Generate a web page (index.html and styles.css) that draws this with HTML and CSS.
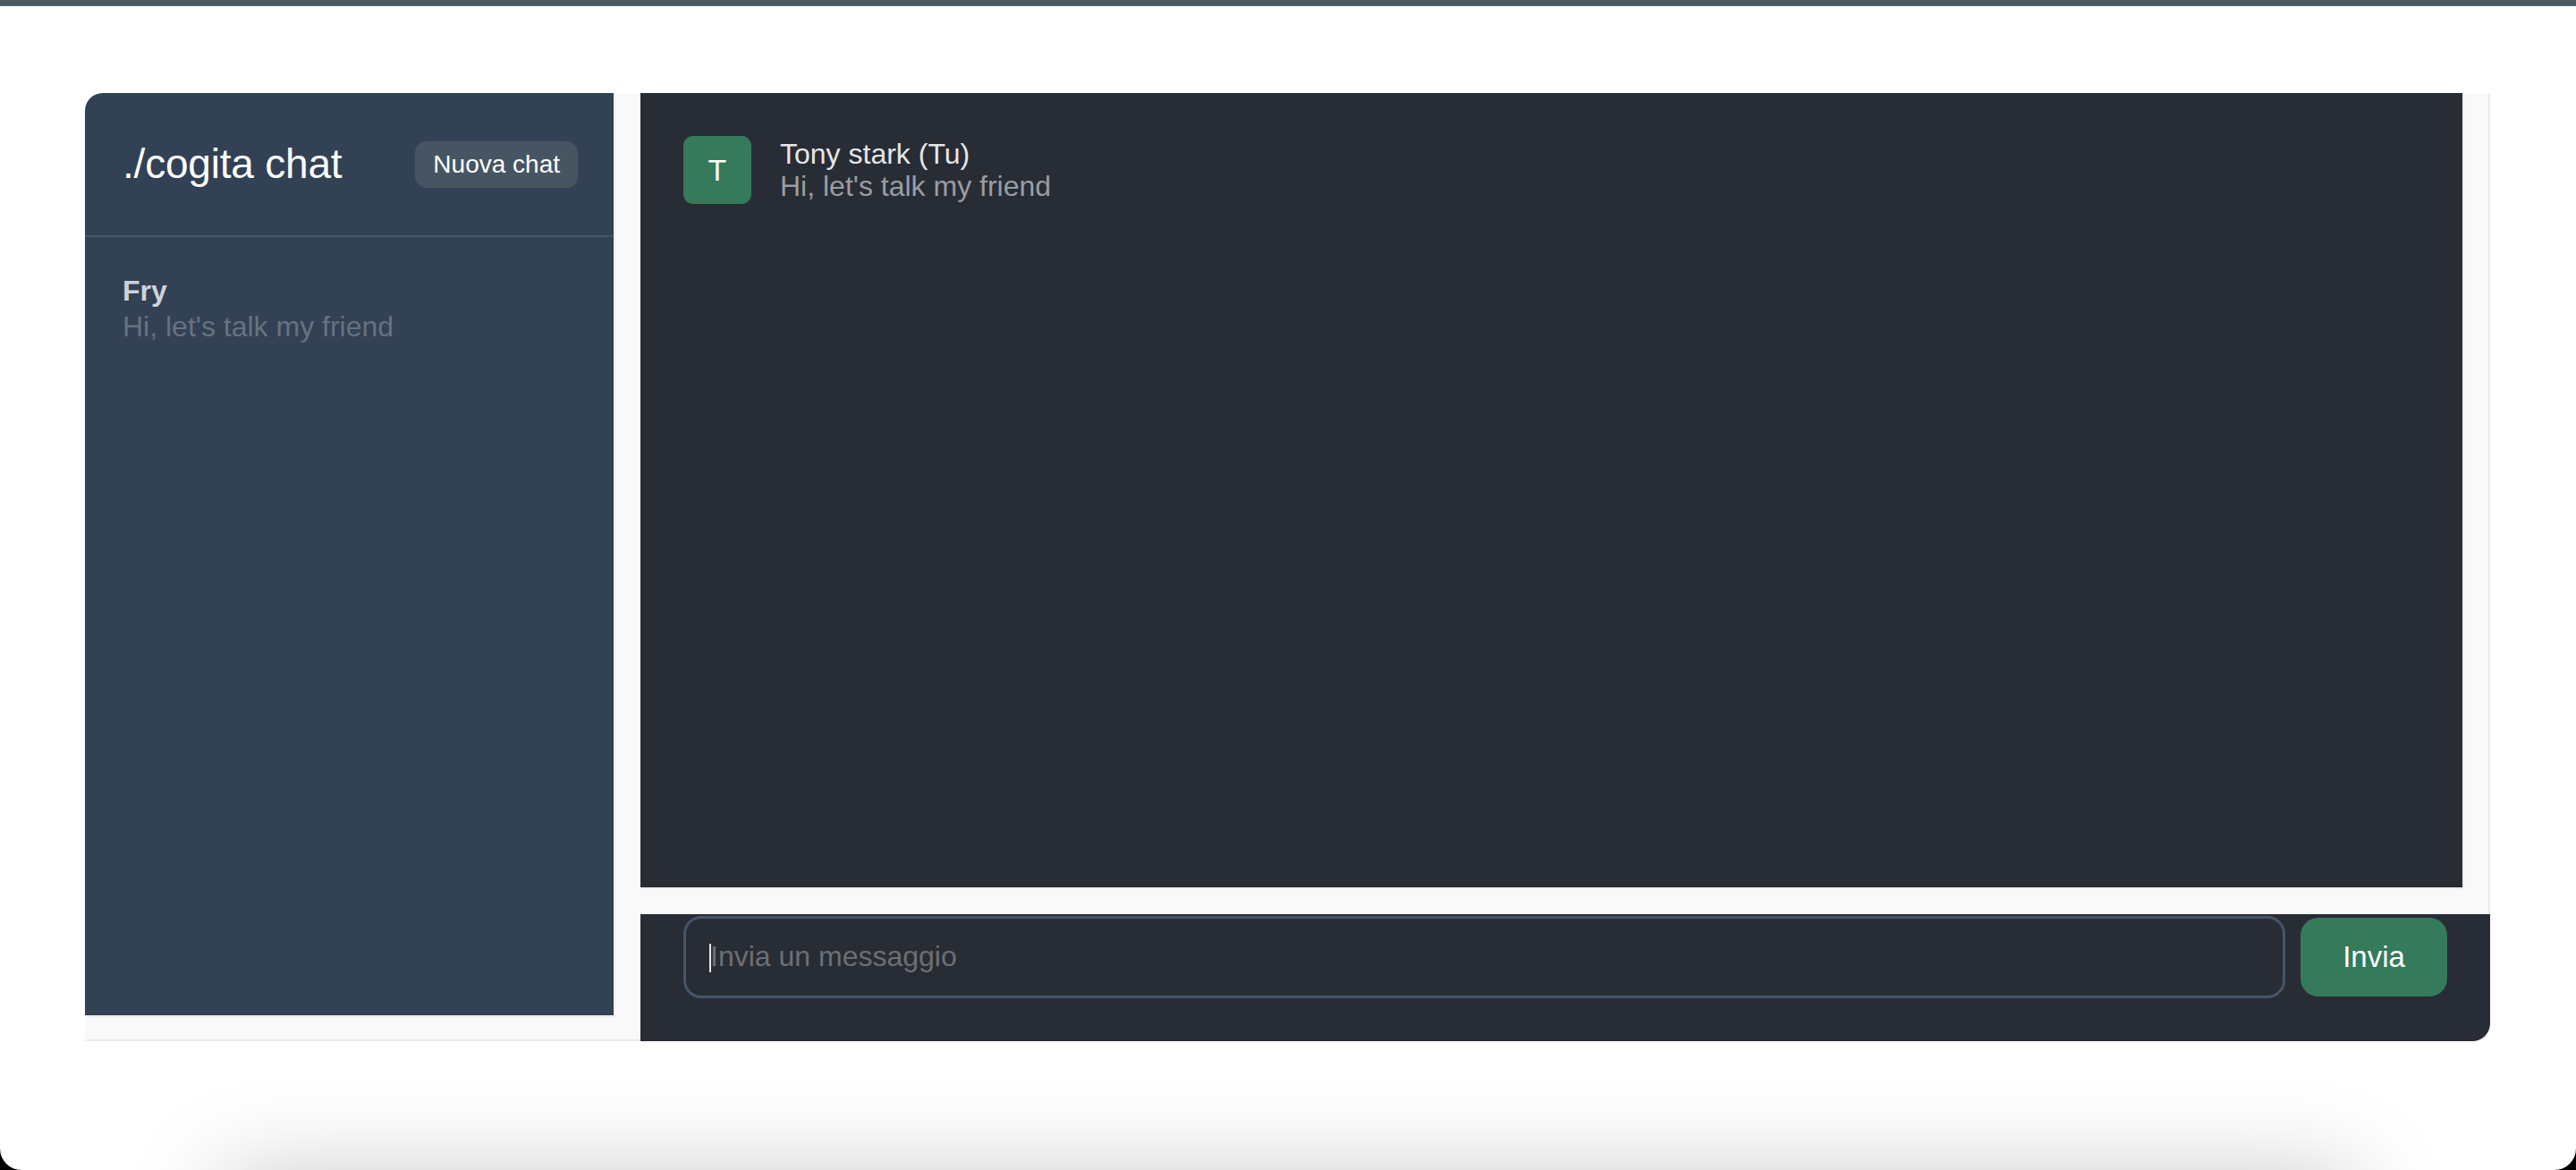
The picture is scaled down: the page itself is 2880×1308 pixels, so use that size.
FILE: index.html
```html
<!DOCTYPE html>
<html lang="it">
<head>
<meta charset="utf-8">
<title>./cogita chat</title>
<link rel="stylesheet" href="styles.css">
</head>
<body>
<div class="window">
  <div class="topbar"></div>
  <main class="app">
    <div class="sidebar-frame">
      <aside class="sidebar">
        <header class="sidebar-head">
          <h1 class="brand">./cogita chat</h1>
          <button class="new-chat" type="button">Nuova chat</button>
        </header>
        <ul class="chat-list">
          <li class="chat-item">
            <div class="chat-name">Fry</div>
            <div class="chat-preview">Hi, let's talk my friend</div>
          </li>
        </ul>
      </aside>
    </div>
    <section class="chat">
      <div class="messages-frame">
        <div class="messages">
          <div class="message">
            <div class="avatar">T</div>
            <div class="message-body">
              <div class="author">Tony stark (Tu)</div>
              <div class="text">Hi, let's talk my friend</div>
            </div>
          </div>
        </div>
      </div>
      <form class="composer">
        <div class="composer-field">
          <span class="caret"></span>
          <input class="composer-input" type="text" placeholder="Invia un messaggio">
        </div>
        <button class="send" type="button">Invia</button>
      </form>
    </section>
  </main>
  <div class="below"></div>
</div>
</body>
</html>
```

FILE: styles.css
```css
html {
  background: #000;
  margin: 0;
  padding: 0;
}

body {
  margin: 0;
  padding: 0;
  background: #000;
  font-family: "Liberation Sans", Arial, Helvetica, sans-serif;
}

.window {
  height: 1308px;
  background: #fff;
  border-radius: 0 0 24px 24px;
  overflow: hidden;
}

.topbar {
  height: 6px;
  background: #4a5862;
  border-bottom: 1px solid #6c7982;
}

.app {
  display: flex;
  margin: 97px 0 0 95px;
  width: 2689px;
  height: 1060px;
}

/* sidebar with its light scroll tracks */
.sidebar-frame {
  width: 621px;
  flex: none;
  box-sizing: border-box;
  display: flex;
  padding: 0 30px 27px 0;
  background: #f9f9f9;
  border-bottom: 2px solid #ebebeb;
  border-top-left-radius: 20px;
}

.sidebar {
  flex: 1;
  background: #334155;
  border-top-left-radius: 20px;
  box-shadow: 2px 2px 0 #eeeeee;
}

.sidebar-head {
  display: flex;
  align-items: center;
  justify-content: space-between;
  height: 159px;
  padding: 0 40px 0 42px;
  border-bottom: 2px solid #465467;
}

.brand {
  margin: 0;
  font-size: 46px;
  font-weight: 400;
  line-height: 1.2;
  color: #fff;
  letter-spacing: -0.2px;
}

.new-chat {
  height: 52px;
  padding: 0 20px;
  border: 0;
  border-radius: 13px;
  background: #475563;
  color: #fff;
  font-family: inherit;
  font-size: 28px;
  line-height: 52px;
}

.chat-list {
  list-style: none;
  margin: 0;
  padding: 0;
}

.chat-item {
  padding: 40px 40px 40px 42px;
}

.chat-name {
  font-size: 32px;
  line-height: 40px;
  font-weight: 700;
  color: #cdd3db;
}

.chat-preview {
  font-size: 32px;
  line-height: 40px;
  color: #66727f;
}

.chat {
  flex: 1;
  display: flex;
  flex-direction: column;
  min-width: 0;
}

/* messages with light scroll tracks */
.messages-frame {
  height: 918px;
  flex: none;
  box-sizing: border-box;
  display: flex;
  padding: 0 29px 30px 0;
  background: #f9f9f9;
  border-right: 2px solid #ebebeb;
}

.messages {
  flex: 1;
  background: #282c35;
  padding: 48px;
  box-shadow: 2px 2px 0 #eeeeee;
}

.message {
  display: flex;
  align-items: center;
  gap: 32px;
}

.avatar {
  width: 76px;
  height: 76px;
  flex: none;
  border-radius: 11px;
  background: #357a5b;
  color: #fff;
  font-size: 34px;
  display: flex;
  align-items: center;
  justify-content: center;
}

.author {
  font-size: 32px;
  line-height: 36px;
  color: #e4e6ea;
}

.text {
  font-size: 32px;
  line-height: 36px;
  color: #9a9da3;
}

.composer {
  flex: 1;
  margin: 0;
  display: flex;
  align-items: center;
  gap: 17px;
  padding: 1px 48px 48px 48px;
  background: #282c35;
  border-bottom-right-radius: 20px;
}

.composer-field {
  flex: 1;
  position: relative;
  display: flex;
}

.caret {
  position: absolute;
  left: 29px;
  top: 31px;
  width: 2px;
  height: 32px;
  background: #e8e8e8;
}

.composer-input {
  flex: 1;
  height: 92px;
  box-sizing: border-box;
  padding: 0 24px 0 27px;
  border: 3px solid #465568;
  border-radius: 20px;
  background: transparent;
  color: #e5e7eb;
  font-family: inherit;
  font-size: 32px;
  outline: none;
}

.composer-input::placeholder {
  color: #6d6f73;
}

.send {
  width: 164px;
  height: 88px;
  flex: none;
  border: 0;
  border-radius: 20px;
  background: #357a5b;
  color: #fff;
  font-family: inherit;
  font-size: 33px;
}

.below {
  margin: 160px 0 0 260px;
  width: 2360px;
  height: 200px;
  background: #fff;
  box-shadow: 0 0 110px 10px rgba(0, 0, 0, 0.22);
}
```
